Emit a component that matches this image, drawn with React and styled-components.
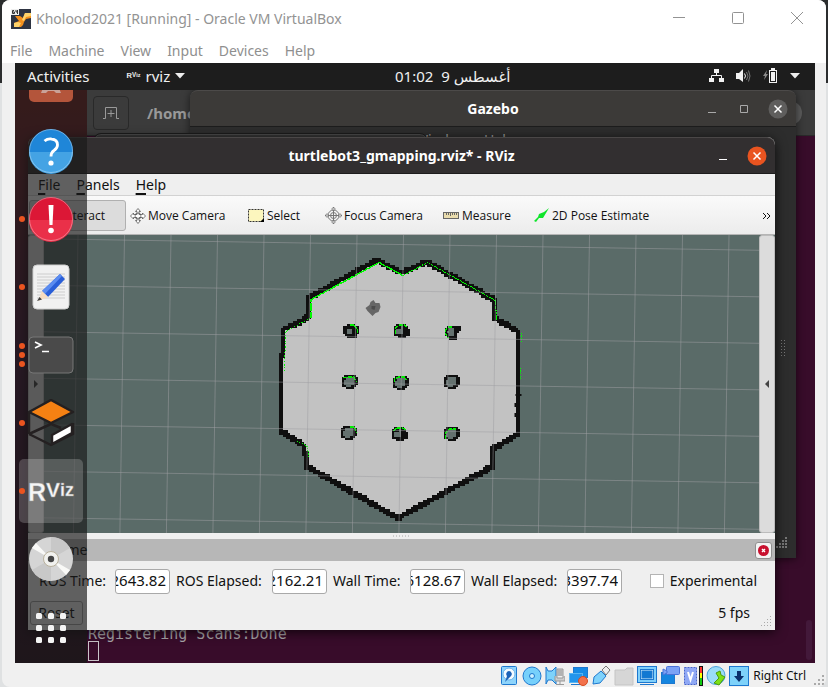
import React from "react";
import styled, { createGlobalStyle, css } from "styled-components";

const UI = `"Noto Sans", "DejaVu Sans", sans-serif`;
const HOST = `"Open Sans", "Noto Sans", sans-serif`;

const GlobalStyle = createGlobalStyle`
  * { box-sizing: border-box; }
  body { margin: 0; background: linear-gradient(#2b2d2e 0 83px, #dfe1e2 83px 100%); }
  button { font: inherit; color: inherit; border: 0; background: none; padding: 0; margin: 0; }
  svg { display: block; flex: none; }
`;

/* ---------- host window ---------- */

const Shell = styled.div`
  min-height: 100vh;
  margin: 0 2px;
  display: flex;
  flex-direction: column;
  background: #f0f0f0;
  border-radius: 8px;
  overflow: hidden;
  font-family: ${HOST};
`;

const HostTitle = styled.header`
  height: 37px;
  padding: 0 21px 0 9px;
  display: flex;
  align-items: center;
  gap: 5px;
  background: #fff;
  color: #939393;
  h1 { margin: 0; flex: 1; font: 400 14px/20px ${UI}; white-space: nowrap; }
`;

const HostControls = styled.div`
  display: flex;
  gap: 43px;
  button { width: 16px; height: 16px; margin-bottom: 1px; }
`;

const HostMenu = styled.nav`
  height: 26px;
  padding: 1px 8px 0;
  display: flex;
  align-items: center;
  gap: 16px;
  background: #fff;
  color: #8f8f8f;
  font: 14px/20px ${UI};
`;

const StatusBar = styled.footer`
  height: 24px;
  padding: 2px 20px 0 0;
  display: flex;
  align-items: center;
  justify-content: flex-end;
  gap: 3px;
  color: #111;
  font: 12px/16px ${UI};
  position: relative;
  span { margin-left: 1px; }
`;

const HostGrip = styled.svg`
  position: absolute;
  right: 2px;
  bottom: 2px;
`;

/* ---------- guest desktop ---------- */

const Guest = styled.main`
  flex: 1;
  margin: 0 11px 0 13px;
  display: flex;
  flex-direction: column;
  font-family: ${UI};
`;

const TopBar = styled.div`
  height: 27px;
  padding: 0 15px 2px 12px;
  display: grid;
  grid-template-columns: 368px 1fr auto;
  align-items: center;
  background: #1d1d1d;
  color: #f0f0f0;
  font-size: 15px;
  line-height: 20px;
`;

const TopLeft = styled.div`
  display: flex;
  align-items: center;
  gap: 36px;
`;

const AppMenu = styled.button`
  display: flex;
  align-items: center;
  gap: 5px;
`;

const Tray = styled.div`
  display: flex;
  align-items: center;
  justify-content: flex-end;
  gap: 12px;
`;

const Workspace = styled.div`
  flex: 1;
  position: relative;
  overflow: hidden;
  background: linear-gradient(#70201f, #45183a 45%, #2a1020);
`;

const Frame = styled.section`
  position: absolute;
  display: flex;
  flex-direction: column;
  inset: ${(p) => p.$inset};
  border-radius: 8px 8px 0 0;
`;

/* terminal */
const TerminalFrame = styled(Frame)`
  background: #380c2a;
  border-radius: 0;
`;

const TerminalBar = styled.div`
  height: 46px;
  padding: 0 13px 0 6px;
  display: flex;
  align-items: center;
  gap: 18px;
  background: #3b3b3b;
  border-bottom: 1px solid #2a2a2a;
  color: #999;
  font-size: 15px;
  font-weight: 700;
  button:first-child {
    width: 36px; height: 34px;
    display: grid; place-items: center;
    border: 1px solid #292929; border-radius: 4px;
  }
  button:last-child { width: 24px; height: 24px; margin-left: auto; border-radius: 12px; background: #5c5c5c; }
`;

const TerminalText = styled.pre`
  flex: 1;
  margin: 0;
  padding: 0 0 2px 1px;
  display: flex;
  flex-direction: column;
  justify-content: flex-end;
  color: #a8a5a8;
  font: 15px/14px "DejaVu Sans Mono", monospace;
  i { width: 11px; height: 20px; border: 1px solid #c9c5c9; }
`;

const ScrollThumb = styled.div`
  position: absolute;
  right: 3px;
  bottom: 3px;
  width: 6px;
  height: 40px;
  border-radius: 3px;
  background: #43193a;
`;

const BackFrame = styled(Frame)`
  background: #353535;
  border: 1px solid #1c1c1c;
  box-shadow: inset 0 1px #4a4a4a;
`;

/* gazebo */
const GazeboFrame = styled(Frame)`
  background: #2d2d2d;
  box-shadow: 0 1px 8px rgba(0, 0, 0, 0.6);
`;

const WindowBar = styled.div`
  height: 37px;
  padding: 0 8px;
  display: grid;
  grid-template-columns: 1fr auto 1fr;
  align-items: center;
  border-radius: 8px 8px 0 0;
  border-top: 1px solid ${(p) => (p.$active ? "#4a4747" : "#4c4a49")};
  border-bottom: 1px solid #1d1d1d;
  background: ${(p) => (p.$active ? "#322f30" : "#3c3a38")};
  color: #fff;
  h2 { grid-column: 2; margin: 0; font-size: 14px; line-height: 20px; font-weight: 700; white-space: nowrap; }
`;

const WindowControls = styled.div`
  display: flex;
  align-items: center;
  justify-content: flex-end;
  gap: 16px;
  color: ${(p) => (p.$active ? "#fff" : "#a9a9a9")};
`;

const GazeboMenu = styled.div`
  padding: 3px 0 0 225px;
  display: flex;
  gap: 16px;
  color: #9a9a9a;
  font-size: 14px;
  line-height: 20px;
`;

const GazeboHandle = styled.svg`
  position: absolute;
  right: 11px;
  top: 250px;
`;

const GazeboGrip = styled.svg`
  position: absolute;
  right: 9px;
  bottom: 9px;
`;

/* rviz */
const RvizFrame = styled(Frame)`
  background: #efefef;
  color: #111;
  box-shadow: 0 2px 12px rgba(0, 0, 0, 0.75);
`;

const RvizMenu = styled.nav`
  height: 22px;
  padding: 0 10px;
  display: flex;
  align-items: center;
  gap: 16px;
  border-bottom: 1px solid #d2d2d2;
  font-size: 14px;
  line-height: 20px;
  u { text-underline-offset: 3px; text-decoration-thickness: 2px; }
`;

const Toolbar = styled.div`
  height: 39px;
  padding: 1px 3px 0 1px;
  display: flex;
  align-items: center;
  border-bottom: 1px solid #b5b5b5;
  background: linear-gradient(#fafafa, #ececec);
  font: 12px/16px ${HOST};
`;

const Tool = styled.button`
  width: ${(p) => p.$width}px;
  height: 31px;
  padding-left: 4px;
  display: flex;
  align-items: center;
  gap: 2px;
  white-space: nowrap;
  ${(p) =>
    p.$pressed &&
    css`
      justify-content: flex-end;
      padding-right: 20px;
      border: 1px solid #b0b0b0;
      border-radius: 3px;
      background: #dcdcdc;
    `}
`;

const More = styled.button`
  margin-left: auto;
  width: 10px;
  display: grid;
  place-items: center;
`;

const Stage = styled.div`
  flex: 1;
  min-height: 0;
  display: flex;
  background: #5a6b68;
  > svg { flex: 1; min-width: 0; height: 100%; }
`;

const Gutter = styled.button`
  width: 16px;
  display: grid;
  place-items: center;
  border: 1px solid #bcbcbc;
  border-radius: 3px;
  background: #dcdcdc;
`;

const Splitter = styled.div`
  height: 6px;
  display: grid;
  place-items: center;
`;

const PanelTitle = styled.div`
  height: 22px;
  padding: 0 3px 0 27px;
  display: flex;
  align-items: center;
  justify-content: space-between;
  background: #b7b7b7;
  font-size: 14px;
  line-height: 20px;
  button {
    width: 17px; height: 17px;
    display: grid; place-items: center;
    border: 1px solid #8f8f8f; border-radius: 3px; background: #f4f4f4;
  }
`;

const TimeRow = styled.div`
  height: 40px;
  padding: 0 18px 0 11px;
  display: grid;
  grid-template-columns: 70px 55px 90px 55px 71px 55px 90px 55px 1fr;
  column-gap: 6px;
  align-items: center;
  font-size: 14px;
  line-height: 20px;
  label { white-space: nowrap; }
`;

const Field = styled.input`
  width: 100%;
  height: 25px;
  padding: 0 3px 2px 0;
  border: 1px solid #a9a9a9;
  border-radius: 3px;
  background: #fff;
  color: #111;
  font: 15px/20px ${UI};
  direction: rtl;
`;

const CheckLabel = styled.label`
  display: flex;
  align-items: center;
  justify-content: flex-end;
  gap: 6px;
  input {
    appearance: none;
    width: 14px; height: 14px;
    margin: 0;
    border: 1px solid #b4b4b4;
    background: #fff;
  }
`;

const BottomRow = styled.div`
  height: 29px;
  padding: 0 25px 5px 2px;
  display: flex;
  align-items: center;
  justify-content: space-between;
  font-size: 14px;
  line-height: 20px;
  button { width: 53px; height: 24px; border: 1px solid #a0a0a0; border-radius: 3px; line-height: 20px; }
  svg { position: absolute; right: 2px; bottom: 2px; }
`;

/* dock */
const Dock = styled.aside`
  position: absolute;
  inset: 0 auto 0 0;
  width: 72px;
  display: flex;
  flex-direction: column;
  justify-content: flex-end;
  overflow: hidden;
  background: rgba(25, 25, 25, 0.67);
`;

const DockItem = styled.button`
  flex: none;
  height: 68px;
  padding-right: 4px;
  display: grid;
  grid-template-columns: 4px 64px;
  align-items: center;
  &:last-child { height: 70px; }
`;

const Dots = styled.span`
  display: grid;
  gap: 3px;
  position: relative;
  z-index: 1;
  margin: 0 -6px 0 4px;
  i { width: 6px; height: 6px; border-radius: 3px; background: #ea5420; }
`;

const Tile = styled.span`
  height: 64px;
  display: grid;
  place-items: center;
  border-radius: 5px;
  background: ${(p) => (p.$focused ? "rgba(255,255,255,0.2)" : "transparent")};
`;

/* ---------- occupancy map ---------- */

const CELL = 2.325;
const WALL = [
  [377, 260], [402, 273], [427, 262], [495, 300], [496, 318], [519, 332], [519, 434], [493, 449],
  [492, 467], [398, 518], [307, 466], [305, 446], [281, 431], [283, 330], [308, 318], [309, 298], [377, 260],
];

const sample = (points, step) => {
  const out = [];
  for (let i = 1; i < points.length; i++) {
    const [x0, y0] = points[i - 1];
    const [x1, y1] = points[i];
    const n = Math.max(1, Math.ceil(Math.hypot(x1 - x0, y1 - y0) / step));
    for (let k = 0; k <= n; k++) out.push([x0 + ((x1 - x0) * k) / n, y0 + ((y1 - y0) * k) / n]);
  }
  return out;
};

const wallPath = () => {
  const seen = new Set();
  let d = "";
  sample(WALL, 1).forEach(([x, y]) => {
    const cx = Math.round(x / CELL);
    const cy = Math.round(y / CELL);
    const key = cx + "," + cy;
    if (seen.has(key)) return;
    seen.add(key);
    const s = CELL * 2;
    d += `M${(cx * CELL - CELL).toFixed(1)} ${(cy * CELL - CELL).toFixed(1)}h${s}v${s}h${-s}z`;
  });
  return d;
};

const scanPath = () => {
  const runs = [
    { keep: 9, pts: [[310, 317], [310, 299], [378, 262], [402, 275]] },
    { keep: 7, pts: [[402, 275], [427, 262], [495, 300], [496, 320]] },
    { keep: 4, pts: [[309, 318], [285, 331], [284, 370]] },
    { keep: 5, pts: [[521, 333], [521, 341]] },
    { keep: 5, pts: [[520, 368], [520, 378]] },
    { keep: 5, pts: [[297, 441], [307, 446], [308, 456]] },
  ];
  let d = "";
  runs.forEach(({ keep, pts }) =>
    sample(pts, 0.9).forEach(([x, y], i) => {
      if ((i * 7) % 10 >= keep) return;
      const s = keep > 7 ? 2 : 1;
      d += `M${Math.round(x)} ${Math.round(y)}h${s}v1h${-s}z`;
    })
  );
  return d;
};

const SHAPES = [
  ["..###..", "#######", "##oo###", "##oo###", ".#####.", "..####."],
  [".####..", "###o##.", "#ooo###", "#ooo###", "#######", "..###.."],
  [".######", "##oo###", "#ooo##.", "##oo#..", ".####..", "..###.."],
  [".#####.", "##ooo##", "#oooo##", "#oooo##", "##oo##.", "..###.."],
];

const PILLARS = [
  [351, 331, 0, "M350 325h4l4 4v5"], [402, 331, 1, "M396 334v-6l4-3h5l3 3"], [453, 333, 2, "M452 327h-3l-3 3v4l3 4"],
  [350, 382, 3, "M344 378l5-1h5l3 5"], [401, 383, 3, "M395 382v-3l4-2h6l2 3"], [452, 382, 3, ""],
  [349, 433, 3, "M350 427h5l2 6"], [400, 434, 1, "M394 431l3-3h6l4 2"], [452, 434, 3, "M446 439v-6l4-4h6"],
];

const BLOB = 2.4;
const pillarPath = (x, y, rows, mark) => {
  let d = "";
  rows.forEach((row, r) =>
    [...row].forEach((c, i) => {
      if (c === mark) d += `M${x - 8 + i * BLOB} ${y - 7 + r * BLOB}h${BLOB}v${BLOB}h${-BLOB}z`;
    })
  );
  return d;
};

function MapView() {
  const cols = Array.from({ length: 17 }, (_, k) => 32 + k * 46.5);
  const rows = Array.from({ length: 7 }, (_, k) => 238.8 + k * 46.5);
  return (
    <svg viewBox="44 235 716 298" preserveAspectRatio="xMidYMid slice" role="img" aria-label="Occupancy map">
      <polygon points={WALL.map((p) => p.join()).join(" ")} fill="#c2c2c2" />
      <path d={wallPath()} fill="#0f0f0f" shapeRendering="crispEdges" />
      <path d="M516 394h6v2h-6zM515 403h4v4h-4zM515 413h4v4h-4z" fill="#0f0f0f" />
      {PILLARS.map(([x, y, s, arc]) => (
        <g key={x + "-" + y} shapeRendering="crispEdges">
          <path d={pillarPath(x, y, SHAPES[s], "#")} fill="#0f0f0f" />
          <path d={pillarPath(x, y, SHAPES[s], "o")} fill="#64716f" />
          {arc && <path d={arc} fill="none" stroke="#00f000" strokeWidth="1.3" strokeDasharray="4 1" />}
        </g>
      ))}
      <path d={scanPath()} fill="#00f800" shapeRendering="crispEdges" />
      <path d="M371 302l3-2 2 3 4 0 1 4-2 5-3 1-3 3-5-5-2-3 4-3z" fill="#666" />
      <path d="M372 306l4 0-1 4-3-1z" fill="#4b4b4b" />
      <g stroke="#a0a0a4" strokeOpacity=".5" fill="none">
        {cols.map((x) => <line key={x} x1={x} y1="235" x2={x - 4.6} y2="533" />)}
        {rows.map((y) => <line key={y} x1="44" y1={y} x2="760" y2={y + 11.5} />)}
      </g>
    </svg>
  );
}

/* ---------- icons ---------- */

const VBoxIcon = () => (
  <svg width="20" height="20" viewBox="0 0 20 20">
    <rect width="20" height="20" fill="#2e3442" />
    <path d="M4 7h5l3 2 2-5h6v5l-5 1-2 3-1 3-2 2H3v-4l5-2z" fill="#f4901d" />
    <path d="M14 4h6v3l-5 1-2 4-2-1zM3 14l4-1 3 1-2 4H3z" fill="#ffd36b" />
    <rect width="8" height="6" fill="#eee" />
    <path d="M3 1.500H1.500v3h2V3h-2M5 1v2h2M6.500 1v4" stroke="#333" fill="none" />
  </svg>
);

const Glyph = ({ d, w = 16, h = 16, sw = 1 }) => (
  <svg width={w} height={h} viewBox={`0 0 ${w} ${h}`} fill="none" stroke="currentColor" strokeWidth={sw}>
    <path d={d} />
  </svg>
);

const Caret = () => (
  <svg width="10" height="6" viewBox="0 0 10 6"><path d="M0 0h10L5 5.500z" fill="#eee" /></svg>
);

const RoundClose = ({ fill }) => (
  <svg width="20" height="20" viewBox="0 0 20 20">
    <circle cx="10" cy="10" r="9.500" fill={fill} />
    <path d="M6.500 6.500l7 7m0-7l-7 7" stroke="#fff" strokeWidth="1.500" />
  </svg>
);

const NetworkIcon = () => (
  <svg width="15" height="14" viewBox="0 0 15 14" fill="#f2f2f2">
    <path d="M5 0h5v4H5zM0 9h5v4H0zM10 9h5v4h-5z" />
    <path d="M7.500 4v2.500M2.500 9V6.500h10V9" stroke="#f2f2f2" fill="none" />
  </svg>
);

const VolumeIcon = () => (
  <svg width="15" height="14" viewBox="0 0 15 14">
    <path d="M0 4h3l4-4v13L3 10H0z" fill="#f2f2f2" />
    <path d="M8.500 4.500q2 2.500 0 5" stroke="#f2f2f2" fill="none" />
    <path d="M10.500 3q3 4 0 8M12.500 1.500q3 5.500 0 11" stroke="#777" fill="none" />
  </svg>
);

const BatteryIcon = () => (
  <svg width="15" height="15" viewBox="0 0 15 15">
    <path d="M4 2L0 8h2l-1 4 4-6H3z" fill="#8b8b8b" />
    <path d="M8 0h4v2h2v13H6V2h2z" fill="#f2f2f2" />
    <path d="M7 3h6v11H7z" fill="#1d1d1d" />
    <path d="M8 4h4v9H8z" fill="#f2f2f2" />
  </svg>
);

const MoveIcon = () => (
  <svg width="16" height="16" viewBox="0 0 16 16" fill="#fff" stroke="#555">
    <path d="M8 .500l2.500 3H9v3h3.500V5l3 3-3 3V9.500H9v3h1.500L8 15.500l-2.500-3H7v-3H3.500V11l-3-3 3-3v1.500H7v-3H5.500z" strokeWidth=".8" />
    <circle cx="8" cy="8" r="3" fill="none" strokeWidth=".7" />
  </svg>
);

const SelectIcon = () => (
  <svg width="17" height="14" viewBox="0 0 17 14">
    <rect x=".5" y=".5" width="15" height="12" fill="#fcf6be" stroke="#333" strokeDasharray="2 1" />
    <path d="M16 9v4h-4z" fill="#000" />
  </svg>
);

const FocusIcon = () => (
  <svg width="17" height="17" viewBox="0 0 17 17" fill="none" stroke="#777">
    <circle cx="8.500" cy="8.500" r="5.500" /><circle cx="8.500" cy="8.500" r="3" />
    <path d="M8.500 0v17M0 8.500h17" /><path d="M7 1h3v2H7zM7 14h3v2H7zM1 7v3h2V7zM14 7v3h2V7z" fill="#ddd" strokeWidth=".6" />
  </svg>
);

const RulerIcon = () => (
  <svg width="17" height="8" viewBox="0 0 17 8">
    <rect x=".5" y=".5" width="15" height="6" fill="#e9dcae" stroke="#666" />
    <path d="M3.500 1v2M5.500 1v2M7.500 1v3M9.500 1v2M11.500 1v2M13.500 1v2" stroke="#666" />
  </svg>
);

const PoseIcon = () => (
  <svg width="16" height="15" viewBox="0 0 16 15"><path d="M0 13l4-4 1-3 5-2 5-4-3 5-3 5-4 0-3 4z" fill="#10e52c" /></svg>
);

const DotGrip = ({ rows, color, size = 2, gap = 4 }) => {
  const n = rows * gap;
  const cells = [];
  for (let r = 0; r < rows; r++) for (let c = rows - 1 - r; c < rows; c++) cells.push([c * gap, r * gap]);
  return (
    <svg width={n} height={n} viewBox={`0 0 ${n} ${n}`}>
      {cells.map(([x, y]) => <rect key={x + "," + y} x={x} y={y} width={size} height={size} fill={color} />)}
    </svg>
  );
};

const Ball = ({ top, bottom, children }) => (
  <svg width="46" height="46" viewBox="0 0 46 46">
    <circle cx="23" cy="23" r="22" fill={top} />
    <path d="M1 24h44a22 22 0 0 1-44 0z" fill={bottom} />
    <circle cx="23" cy="23" r="21.500" fill="none" stroke="#fff" strokeOpacity=".35" />
    {children}
  </svg>
);

const SoftwareIcon = () => (
  <svg width="44" height="44" viewBox="0 0 44 44">
    <rect y="1" width="44" height="40" rx="5" fill="#b4553b" />
    <path d="M12 32l2-5h16l2 5h-5l-2-2h-6l-2 2z" fill="#c9a298" />
  </svg>
);

const HelpIcon = () => (
  <Ball top="#1f86d8" bottom="#44a3e4">
    <path d="M16.500 13q3-2.500 7-2 6 .5 6 6 0 3-3.500 5.500-3 2-3 6" fill="none" stroke="#fff" strokeWidth="2.800" />
    <circle cx="23" cy="35" r="2.600" fill="#fff" />
  </Ball>
);

const AlertIcon = () => (
  <Ball top="#dc1736" bottom="#ea3049">
    <path d="M20.500 9h5l-1 20h-3z" fill="#fff" /><circle cx="23" cy="34.500" r="2.800" fill="#fff" />
  </Ball>
);

const EditorIcon = () => (
  <svg width="38" height="46" viewBox="0 0 38 46">
    <rect x="1" y="1" width="36" height="44" rx="4" fill="#f1f1f1" stroke="#cfcfcf" />
    <path d="M5 10h28M5 13h28M5 16h28M5 19h28M5 22h28M5 25h28M5 28h28M5 31h28M5 34h28" stroke="#cdcdcd" />
    <path d="M28 10l5 5-17 18-6-6z" fill="#2a5fd8" /><path d="M28 10l2 2-17 18-3-3z" fill="#5b8cf0" />
    <path d="M10 27l6 6-10 4z" fill="#f7dcc0" /><path d="M7.500 33l2.500 2.500L5 37z" fill="#444" />
  </svg>
);

const TerminalIcon = () => (
  <svg width="46" height="38" viewBox="0 0 46 38">
    <rect x="1" y="1" width="44" height="36" rx="4" fill="#4a4a4a" stroke="#767676" />
    <path d="M7 6l6 3-6 3M14 15.500h7" fill="none" stroke="#fff" strokeWidth="1.700" />
  </svg>
);

const GazeboIcon = () => (
  <svg width="48" height="48" viewBox="0 0 48 48" stroke="#242021" strokeWidth="2.500" strokeLinejoin="round">
    <path d="M2 13v22M2 35l22 11 22-11V24" fill="none" /><path d="M24 25L2 35M24 25l10 4" fill="none" />
    <path d="M24 1l22 12-22 11L2 13z" fill="#f58113" />
    <path d="M25 36l20-11v9L25 45z" fill="#fff" />
  </svg>
);

const RvizIcon = ({ small }) => (
  <svg width={small ? 15 : 50} height={small ? 11 : 36} viewBox="0 0 50 36">
    <text x="2" y="28" fontFamily="Liberation Sans" fontWeight="700" fill="#f6f6f6" stroke="#9a9a9a" strokeWidth=".4">
      <tspan fontSize="25">R</tspan>
      <tspan fontSize="21" dy="-4">V</tspan>
      <tspan fontSize="18" dy="-1">iz</tspan>
    </text>
  </svg>
);

const DiscIcon = () => (
  <svg width="46" height="46" viewBox="0 0 46 46">
    <circle cx="23" cy="23" r="22" fill="#d5d5d5" />
    <path d="M23 23V1a22 22 0 0 1 19 11zM23 23v22a22 22 0 0 1-19-11z" fill="#c8c8c8" />
    <path d="M23 23L4 12l4-5zM23 23l19 11-4 5z" fill="#f9f9f7" />
    <circle cx="23" cy="23" r="7.500" fill="#f1f1ee" stroke="#b9b19c" /><circle cx="23" cy="23" r="3.200" fill="#454545" />
  </svg>
);

const AppsIcon = () => (
  <svg width="30" height="30" viewBox="0 0 30 30" fill="#f4f4f4">
    {[0, 12, 24].map((y) => [0, 12, 24].map((x) => <rect key={x + "," + y} x={x} y={y} width="6" height="6" rx="1.500" />))}
  </svg>
);

const DOCK = [
  { name: "Software", icon: <SoftwareIcon />, dots: 0 },
  { name: "Help", icon: <HelpIcon />, dots: 0 },
  { name: "Problem report", icon: <AlertIcon />, dots: 1 },
  { name: "Text Editor", icon: <EditorIcon />, dots: 1 },
  { name: "Terminal", icon: <TerminalIcon />, dots: 3 },
  { name: "Gazebo", icon: <GazeboIcon />, dots: 1 },
  { name: "RViz", icon: <RvizIcon />, dots: 1, focused: true },
  { name: "Disc", icon: <DiscIcon />, dots: 0 },
  { name: "Show Applications", icon: <AppsIcon />, dots: 0 },
];

const Dev = ({ children, w = 20 }) => (
  <svg width={w} height="20" viewBox={`0 0 ${w} 20`} stroke="#1d78cf">{children}</svg>
);

const STATUS = [
  <Dev><rect x="2.500" y=".5" width="15" height="18" rx="1" fill="#8ed4fb" /><circle cx="10" cy="8" r="6" fill="#f4fbff" stroke="#6ab2ea" /><path d="M10 5a3 3 0 0 1 2 5l-6 6 2-6a3 3 0 0 1 2-5z" fill="#1c62b8" stroke="none" /></Dev>,
  <Dev><circle cx="10" cy="10" r="9" fill="#76d0fb" /><circle cx="10" cy="10" r="2.500" fill="#c9efff" /></Dev>,
  <Dev><path d="M1 1l2 4h4l4-4v17l-4-4H3l-2 4z" fill="#7ed2fa" /><path d="M12 3h6v9h-6zM10 10v5h10v-5M15 15v4M11 18.500h8M13 5h4M13 7h4M13 9h4" fill="#ccc" stroke="#999" /></Dev>,
  <Dev><rect x="5.500" y="1.500" width="14" height="10" fill="#168be5" /><rect x="1.500" y="7.500" width="13" height="9" fill="#2295ec" stroke="#56b6f5" /><path d="M3 18.500h10" /><circle cx="15" cy="15" r="4.500" fill="#f2714b" stroke="#d44b22" /></Dev>,
  <Dev><path d="M2 18l1-7 7-6 5 5-6 7z" fill="#7fd2fb" /><path d="M11 4l4-4 4 4-4 5z" fill="#eee" stroke="#777" /></Dev>,
  <Dev><path d="M1 19V4h10l2-2h6v17z" fill="#d6d6d6" stroke="#c4c4c4" /></Dev>,
  <Dev><rect x=".5" y=".5" width="19" height="16" fill="#80d0fb" /><rect x="3.500" y="3.500" width="13" height="10" fill="#d6f2ff" /><rect x="5" y="5" width="10" height="7" fill="#1278d2" /><path d="M3 18.500h14" /></Dev>,
  <Dev><rect x="1.500" y="6.500" width="13" height="11" fill="#1585df" /><rect x="6.500" y=".5" width="13" height="8" rx="1" fill="#7ba2f5" stroke="#4a72d8" /><path d="M3 3l4 2v2l-4 2z" fill="#7ba2f5" stroke="#4a72d8" /></Dev>,
  <Dev><rect x="1.500" y="1.500" width="12" height="17" fill="#8fa8f5" stroke="#4966cc" strokeDasharray="2 1" /><path d="M5 6l2.500 8L10 6" fill="none" stroke="#fff" strokeWidth="2" /><path d="M16 0h4v20h-4z" fill="#111" stroke="none" /><path d="M17 1h2v6h-2z" fill="#f33" stroke="none" /><path d="M17 7h2v5h-2z" fill="#ff0" stroke="none" /><path d="M17 12h2v7h-2z" fill="#1c1" stroke="none" /></Dev>,
  <Dev><circle cx="10" cy="9.500" r="9" fill="#9adcf8" stroke="#4aa2dc" /><path d="M10 7l4-2 1 4 4 2-6 8-5-2 5-5z" fill="#7de016" stroke="#4b9c0c" /></Dev>,
  <Dev><rect x=".5" y=".5" width="19" height="19" fill="#7ed2fa" /><path d="M8 5h4v5h3l-5 6-5-6h3z" fill="#0a2f6c" stroke="none" /></Dev>,
];

const TIMES = [
  ["ROS Time:", "2643.82"],
  ["ROS Elapsed:", "2162.21"],
  ["Wall Time:", "6128.67"],
  ["Wall Elapsed:", "3397.74"],
];

export default function App() {
  return (
    <>
      <GlobalStyle />
      <Shell>
        <HostTitle>
          <VBoxIcon />
          <h1>Kholood2021 [Running] - Oracle VM VirtualBox</h1>
          <HostControls>
            <button aria-label="Minimize"><Glyph d="M2 7.500h12" /></button>
            <button aria-label="Maximize"><Glyph d="M3.500 2.500h9q1 0 1 1v9q0 1-1 1h-9q-1 0-1-1v-9q0-1 1-1z" /></button>
            <button aria-label="Close"><Glyph d="M2 2l12 12M14 2L2 14" /></button>
          </HostControls>
        </HostTitle>
        <HostMenu>
          {["File", "Machine", "View", "Input", "Devices", "Help"].map((m) => <button key={m}>{m}</button>)}
        </HostMenu>

        <Guest>
          <TopBar>
            <TopLeft>
              <button>Activities</button>
              <AppMenu><RvizIcon small />rviz<Caret /></AppMenu>
            </TopLeft>
            <span>01:02&nbsp; 9 أغسطس</span>
            <Tray><NetworkIcon /><VolumeIcon /><BatteryIcon /><Caret /></Tray>
          </TopBar>

          <Workspace>
            <TerminalFrame $inset="0 0 0 72px">
              <TerminalBar>
                <button aria-label="New tab"><Glyph d="M0 13.500h2.500v-11h11v11H16M8 5v7M4.500 8.500h7" /></button>
                /home
                <button aria-label="Close terminal" />
              </TerminalBar>
              <TerminalText>Registering Scans:Done<i /></TerminalText>
              <ScrollThumb />
            </TerminalFrame>

            <GazeboFrame $inset="0 19px 105px 175px">
              <WindowBar>
                <h2>Gazebo</h2>
                <WindowControls>
                  <Glyph d="M4 11.500h8" />
                  <Glyph d="M4.500 4.500h7v7h-7z" />
                  <button aria-label="Close Gazebo"><RoundClose fill="#5f5e5d" /></button>
                </WindowControls>
              </WindowBar>
              <GazeboMenu><span>Window</span><span>Help</span></GazeboMenu>
              <GazeboHandle width="5" height="18" viewBox="0 0 5 18">
                <path d="M1.500 0v18M4.500 0v18" stroke="#777" strokeDasharray="1 2" />
              </GazeboHandle>
              <GazeboGrip width="12" height="12" viewBox="0 0 12 12">
                <path d="M10 0h2v2h-2zM7 3h2v2H7zM10 3h2v2h-2zM4 6h2v2H4zM7 6h2v2H7zM10 6h2v2h-2zM1 9h2v2H1zM4 9h2v2H4zM7 9h2v2H7zM10 9h2v2h-2z" fill="#777" />
              </GazeboGrip>
            </GazeboFrame>

            <BackFrame $inset="43px 387px 200px 78px" />

            <RvizFrame $inset="47px 40px 33px 13px">
              <WindowBar $active>
                <h2>turtlebot3_gmapping.rviz* - RViz</h2>
                <WindowControls $active>
                  <Glyph d="M4 11.500h8" />
                  <button aria-label="Close RViz"><RoundClose fill="#e95420" /></button>
                </WindowControls>
              </WindowBar>
              <RvizMenu>
                <button><u>F</u>ile</button>
                <button><u>P</u>anels</button>
                <button><u>H</u>elp</button>
              </RvizMenu>
              <Toolbar>
                <Tool $width={97} $pressed aria-pressed="true">Interact</Tool>
                <Tool $width={118}><MoveIcon />Move Camera</Tool>
                <Tool $width={77}><SelectIcon />Select</Tool>
                <Tool $width={118}><FocusIcon />Focus Camera</Tool>
                <Tool $width={91}><RulerIcon />Measure</Tool>
                <Tool $width={130}><PoseIcon />2D Pose Estimate</Tool>
                <More aria-label="More tools"><Glyph w={10} h={8} d="M1 1l3 3-3 3M5 1l3 3-3 3" /></More>
              </Toolbar>
              <Stage>
                <Gutter aria-label="Toggle left panel">
                  <svg width="4" height="8" viewBox="0 0 4 8"><path d="M0 0l4 4-4 4z" fill="#444" /></svg>
                </Gutter>
                <MapView />
                <Gutter aria-label="Toggle right panel">
                  <svg width="4" height="8" viewBox="0 0 4 8"><path d="M4 0L0 4l4 4z" fill="#444" /></svg>
                </Gutter>
              </Stage>
              <Splitter>
                <svg width="17" height="2" viewBox="0 0 17 2"><path d="M0 1h17" stroke="#aaa" strokeDasharray="1 2" /></svg>
              </Splitter>
              <PanelTitle>
                Time
                <button aria-label="Close Time panel">
                  <svg width="11" height="11" viewBox="0 0 11 11">
                    <circle cx="5.500" cy="5.500" r="5.500" fill="#c8102e" />
                    <path d="M4 4l3 3m0-3L4 7" stroke="#fff" strokeWidth="1.400" />
                  </svg>
                </button>
              </PanelTitle>
              <TimeRow>
                {TIMES.map(([label, value]) => (
                  <React.Fragment key={label}>
                    <label htmlFor={label}>{label}</label>
                    <Field id={label} readOnly value={value} />
                  </React.Fragment>
                ))}
                <CheckLabel><input type="checkbox" />Experimental</CheckLabel>
              </TimeRow>
              <BottomRow>
                <button>Reset</button>
                <span>5 fps</span>
                <DotGrip rows={4} gap={3} size={1} color="#aaa" />
              </BottomRow>
            </RvizFrame>

            <Dock>
              {DOCK.map(({ name, icon, dots, focused }) => (
                <DockItem key={name} aria-label={name}>
                  <Dots>{Array.from({ length: dots }, (_, i) => <i key={i} />)}</Dots>
                  <Tile $focused={focused}>{icon}</Tile>
                </DockItem>
              ))}
            </Dock>
          </Workspace>
        </Guest>

        <StatusBar>
          {STATUS.map((icon, i) => <React.Fragment key={i}>{icon}</React.Fragment>)}
          <span>Right Ctrl</span>
          <HostGrip width="10" height="10" viewBox="0 0 10 10">
            <path d="M8 0h2v2H8zM4 4h2v2H4zM8 4h2v2H8zM0 8h2v2H0zM4 8h2v2H4zM8 8h2v2H8z" fill="#aaa" />
          </HostGrip>
        </StatusBar>
      </Shell>
    </>
  );
}
